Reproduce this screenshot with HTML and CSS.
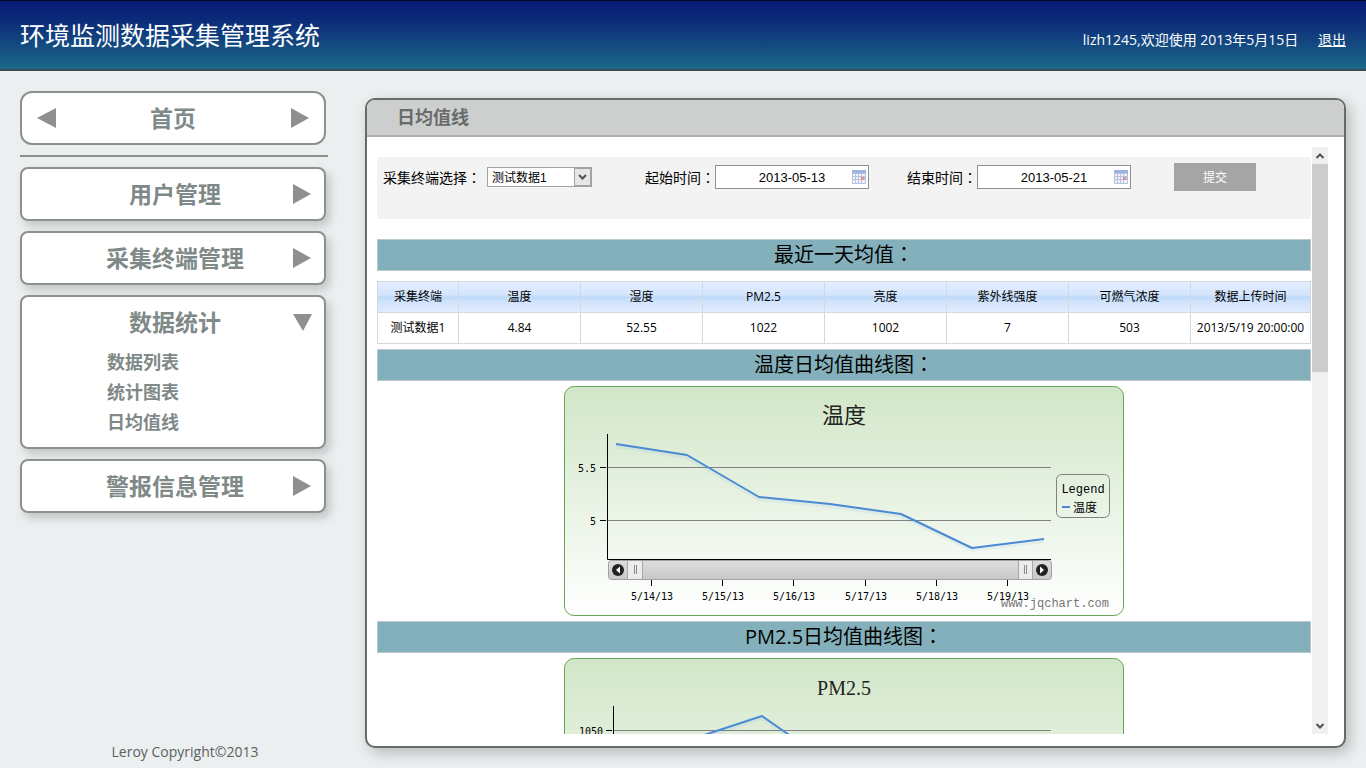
FILE: index.html
```html
<!DOCTYPE html>
<html lang="zh-CN">
<head>
<meta charset="utf-8">
<title>环境监测数据采集管理系统</title>
<link rel="stylesheet" href="styles.css">
</head>
<body>
<header class="topbar">
  <h1 class="brand">环境监测数据采集管理系统</h1>
  <p class="welcome">lizh1245,欢迎使用 2013年5月15日 <a class="logout" href="#">退出</a></p>
</header>
<div class="page">
  <aside class="sidebar">
    <nav class="menu">
      <a class="card home" href="#">
        <svg class="arrow" viewBox="0 0 20 20"><path d="M0 10 19 0V20Z"/></svg>
        <span class="card-title">首页</span>
        <svg class="arrow" viewBox="0 0 20 20"><path d="M2 0 20 10 2 20Z"/></svg>
      </a>
      <div class="rule"></div>
      <section class="card shaded">
        <button class="card-head" type="button"><span class="card-title">用户管理</span><svg class="arrow" viewBox="0 0 20 20"><path d="M1 0 19 10 1 20Z"/></svg></button>
      </section>
      <section class="card shaded">
        <button class="card-head" type="button"><span class="card-title">采集终端管理</span><svg class="arrow" viewBox="0 0 20 20"><path d="M1 0 19 10 1 20Z"/></svg></button>
      </section>
      <section class="card shaded open">
        <button class="card-head" type="button"><span class="card-title">数据统计</span><svg class="arrow" viewBox="0 0 20 20"><path d="M1 2H20L11 19Z"/></svg></button>
        <ul class="submenu">
          <li><a href="#">数据列表</a></li>
          <li><a href="#">统计图表</a></li>
          <li><a href="#">日均值线</a></li>
        </ul>
      </section>
      <section class="card shaded">
        <button class="card-head" type="button"><span class="card-title">警报信息管理</span><svg class="arrow" viewBox="0 0 20 20"><path d="M1 0 19 10 1 20Z"/></svg></button>
      </section>
    </nav>
    <footer class="copyright">Leroy Copyright©2013</footer>
  </aside>

  <main class="panel">
    <h2 class="panel-title">日均值线</h2>
    <div class="panel-body">
      <div class="content">
        <form class="filter">
          <label for="terminal">采集终端选择<span lang="zh-TW">：</span></label>
          <span class="select-wrap">
            <select id="terminal"><option>测试数据1</option></select>
            <svg class="select-arrow" viewBox="0 0 18 20"><rect x="0.5" y="1.5" width="16" height="17" fill="#e6e6e6" stroke="#a3a3a3"/><path d="M5 8 8.500 11.500 12 8" fill="none" stroke="#505050" stroke-width="2"/></svg>
          </span>
          <label class="start" for="from">起始时间<span lang="zh-TW">：</span></label>
          <span class="date-wrap">
            <input id="from" type="text" value="2013-05-13">
            <svg class="calendar" viewBox="0 0 14 14"><rect width="14" height="14" rx="1" fill="#b9c2dc"/><rect y="0" width="14" height="3" fill="#9fb3e2"/><path d="M1 4h2v2H1zM4 4h2v2H4zM7 4h2v2H7zM10 4h3v2h-3zM1 7h2v2H1zM4 7h2v2H4zM7 7h2v2H7zM1 10h2v3H1zM4 10h2v3H4zM7 10h2v3H7zM10 10h3v3h-3z" fill="#eef2ff"/><path d="M9 7h3v3H9z" fill="#e59393"/></svg>
          </span>
          <label class="end" for="to">结束时间<span lang="zh-TW">：</span></label>
          <span class="date-wrap">
            <input id="to" type="text" value="2013-05-21">
            <svg class="calendar" viewBox="0 0 14 14"><rect width="14" height="14" rx="1" fill="#b9c2dc"/><rect y="0" width="14" height="3" fill="#9fb3e2"/><path d="M1 4h2v2H1zM4 4h2v2H4zM7 4h2v2H7zM10 4h3v2h-3zM1 7h2v2H1zM4 7h2v2H4zM7 7h2v2H7zM1 10h2v3H1zM4 10h2v3H4zM7 10h2v3H7zM10 10h3v3h-3z" fill="#eef2ff"/><path d="M9 7h3v3H9z" fill="#e59393"/></svg>
          </span>
          <button class="submit" type="submit">提交</button>
        </form>

        <h3 class="band">最近一天均值<span lang="zh-TW">：</span></h3>
        <table class="readings">
          <colgroup><col class="col-name"><col class="col-value" span="6"><col></colgroup>
          <thead>
            <tr><th>采集终端</th><th>温度</th><th>湿度</th><th>PM2.5</th><th>亮度</th><th>紫外线强度</th><th>可燃气浓度</th><th>数据上传时间</th></tr>
          </thead>
          <tbody>
            <tr><td>测试数据1</td><td>4.84</td><td>52.55</td><td>1022</td><td>1002</td><td>7</td><td>503</td><td>2013/5/19 20:00:00</td></tr>
          </tbody>
        </table>

        <h3 class="band">温度日均值曲线图<span lang="zh-TW">：</span></h3>
        <div class="chart">
          <svg class="plot" viewBox="0 0 558 228">
            <defs>
              <linearGradient id="bar" x1="0" y1="0" x2="0" y2="1"><stop offset="0" stop-color="#dedede"/><stop offset="1" stop-color="#c8c8c8"/></linearGradient>
            </defs>
            <text class="plot-title" x="279" y="36">温度</text>
            <path class="grid" d="M43 80.500H486M43 133.500H486"/>
            <path class="axis" d="M35 80.500h6M35 133.500h6M42.500 47V172.500H486"/>
            <g class="tick-label y"><text x="31" y="85">5.5</text><text x="31" y="138">5</text></g>
            <polyline class="halo" points="51,59 122,70 194,112 265,119 336,129 407,163 479,154"/>
            <polyline class="series" points="51,57 122,68 194,110 265,117 336,127 407,161 479,152"/>
            <rect x="43.500" y="173.500" width="443" height="19" rx="3" fill="url(#bar)" stroke="#a0a0a0"/>
            <path d="M63 174h14v18H63zM453 174h14v18h-14z" fill="#ececec"/>
            <path d="M62.500 174v18M77.500 174v18M453.500 174v18M467.500 174v18" stroke="#a8a8a8"/>
            <path d="M69.500 178v9M71.500 178v9M459.500 178v9M461.500 178v9" stroke="#888888"/>
            <circle cx="53" cy="183" r="6" fill="#222222"/><path d="M55 179.500v7L51 183z" fill="#ffffff"/>
            <circle cx="477" cy="183" r="6" fill="#222222"/><path d="M475 179.500v7l4-3.500z" fill="#ffffff"/>
            <path class="axis" d="M86.500 193v6M157.500 193v6M228.500 193v6M300.500 193v6M371.500 193v6M442.500 193v6"/>
            <g class="tick-label x"><text x="87" y="213">5/14/13</text><text x="158" y="213">5/15/13</text><text x="229" y="213">5/16/13</text><text x="301" y="213">5/17/13</text><text x="372" y="213">5/18/13</text><text x="443" y="213">5/19/13</text></g>
            <rect x="491.500" y="87.500" width="53" height="43" rx="5" fill="none" stroke="#7d857a"/>
            <text class="legend" x="518" y="106">Legend</text>
            <path d="M497 120h8" stroke="#4a8ad4" stroke-width="2"/>
            <text class="legend-item" x="508" y="125">温度</text>
            <text class="credit" x="544" y="220">www.jqchart.com</text>
          </svg>
        </div>

        <h3 class="band">PM2.5日均值曲线图<span lang="zh-TW">：</span></h3>
        <div class="chart">
          <svg class="plot" viewBox="0 0 558 228">
            <text class="plot-title latin" x="279" y="36">PM2.5</text>
            <path class="grid" d="M49 71.500H486"/>
            <path class="axis" d="M41 71.500h6M48.500 47V172.500H486"/>
            <g class="tick-label y"><text x="38" y="76">1050</text></g>
            <polyline class="halo" points="127,82 197,59 253,98"/>
            <polyline class="series" points="127,80 197,57 253,96"/>
          </svg>
        </div>
      </div>
      <div class="scrollbar">
        <svg class="scroll-arrow" viewBox="0 0 16 17"><path d="M4.500 11 8 7.500 11.500 11"/></svg>
        <div class="thumb"></div>
        <svg class="scroll-arrow last" viewBox="0 0 16 17"><path d="M4.500 7 8 10.500 11.500 7"/></svg>
      </div>
    </div>
  </main>
</div>
</body>
</html>
```
FILE: styles.css
```css
* {
  box-sizing: border-box;
}

body {
  display: flex;
  flex-direction: column;
  height: 100vh;
  margin: 0;
  overflow: hidden;
  background: #ebeff0;
  color: #000;
  font-family: "Open Sans", "Noto Sans CJK SC", sans-serif;
  font-size: 14px;
}

h1, h2, h3, p, ul {
  margin: 0;
  padding: 0;
}

h1, h3 {
  font-weight: normal;
}

a {
  color: inherit;
  text-decoration: none;
}

button {
  padding: 0;
  border: 0;
  background: none;
  color: inherit;
  font: inherit;
  cursor: pointer;
}

/* Top bar */
.topbar {
  display: flex;
  flex: none;
  justify-content: space-between;
  height: 71px;
  padding: 0 20px;
  border-top: 1px solid #04061c;
  border-bottom: 2px solid #3a4a55;
  background: linear-gradient(#081b76, #0c2878 25%, #1a6988);
  color: #fff;
}

.brand {
  font-size: 25px;
  line-height: 68px;
}

.welcome {
  padding-top: 8px;
  line-height: 62px;
}

.logout {
  margin-left: 16px;
  text-decoration: underline;
}

/* Columns */
.page {
  display: flex;
  flex: 1;
  gap: 37px;
  min-height: 0;
  padding: 0 20px;
}

.sidebar {
  display: flex;
  flex: none;
  flex-direction: column;
  justify-content: space-between;
  width: 308px;
  padding: 20px 0 6px;
}

.menu {
  display: flex;
  flex-direction: column;
  gap: 10px;
  color: #7f8988;
  font-weight: bold;
}

.card {
  margin-right: 2px;
  border: 2px solid #8e9090;
  border-radius: 8px;
  background: #fff;
}

.shaded {
  box-shadow: 4px 5px 10px rgba(0, 0, 0, 0.18);
}

.home {
  display: flex;
  align-items: center;
  justify-content: space-between;
  height: 54px;
  padding: 0 15px;
  border-radius: 12px;
}

.rule {
  height: 2px;
  background: #8e9090;
}

.card-head {
  display: grid;
  grid-template-columns: 20px 1fr 20px;
  align-items: center;
  width: 100%;
  height: 50px;
  padding: 0 12px 0 16px;
}

.card-title {
  grid-column: 2;
  font-size: 23px;
  line-height: 50px;
  text-align: center;
}

.arrow {
  width: 20px;
  height: 20px;
  fill: #8e9090;
}

.submenu {
  padding: 0 0 10px 85px;
  list-style: none;
  font-size: 18px;
  line-height: 30px;
}

.copyright {
  padding-left: 22px;
  color: #5c5f60;
  line-height: 20px;
  text-align: center;
}

/* Main panel */
.panel {
  display: flex;
  flex: 1;
  flex-direction: column;
  min-width: 0;
  margin: 27px 0 20px;
  overflow: hidden;
  border: 2px solid #6a6a6a;
  border-radius: 10px;
  background: #fff;
  box-shadow: 4px 5px 14px rgba(0, 0, 0, 0.22);
}

.panel-title {
  flex: none;
  padding-left: 30px;
  border-bottom: 2px solid #b0b0b0;
  background: #cdcfce;
  color: #696b6b;
  font-size: 18px;
  font-weight: bold;
  line-height: 35px;
}

.panel-body {
  display: flex;
  flex: 1;
  gap: 1px;
  min-height: 0;
  padding: 10px 16px 12px 10px;
}

.content {
  flex: 1;
  min-width: 0;
  overflow: auto;
  padding-top: 10px;
  scrollbar-width: none;
}

.scrollbar {
  display: flex;
  flex-direction: column;
  width: 16px;
  background: #f0f0f0;
}

.scroll-arrow {
  flex: none;
  width: 16px;
  height: 17px;
  fill: none;
  stroke: #505050;
  stroke-width: 2;
}

.thumb {
  height: 208px;
  background: #cdcdcd;
}

.last {
  margin-top: auto;
}

/* Filter row */
.filter {
  display: flex;
  align-items: center;
  margin-bottom: 20px;
  padding: 6px 6px 28px;
  background: #f3f3f3;
}

.filter label {
  white-space: nowrap;
}

.select-wrap, .date-wrap {
  position: relative;
  display: flex;
}

.select-wrap {
  margin-left: 6px;
}

.select-wrap select {
  width: 105px;
  height: 20px;
  padding: 1px 4px 0;
  appearance: none;
  border: 1px solid #a3a3a3;
  border-radius: 0;
  background: #fff;
  color: #000;
  font-family: "Liberation Sans", "Noto Sans CJK SC", sans-serif;
  font-size: 12px;
}

.select-arrow {
  position: absolute;
  top: 0;
  right: 0;
  width: 18px;
  height: 20px;
  pointer-events: none;
}

.start {
  margin-left: 53px;
}

.end {
  margin-left: 38px;
}

.date-wrap input {
  width: 154px;
  height: 24px;
  padding: 0;
  border: 1px solid #8f9090;
  background: #fff;
  font-family: "Liberation Sans", sans-serif;
  font-size: 13px;
  text-align: center;
}

.calendar {
  position: absolute;
  top: 5px;
  right: 3px;
  width: 14px;
  height: 14px;
}

.submit {
  width: 82px;
  height: 28px;
  margin-left: 43px;
  background: #a5a5a5;
  color: #fff;
  font-size: 12px;
}

/* Section bands and table */
.band {
  border: 1px solid #b9c9cc;
  background: #84b0bb;
  font-size: 20px;
  line-height: 30px;
  text-align: center;
}

.readings {
  width: 100%;
  margin: 10px 0 5px;
  border-collapse: collapse;
  table-layout: fixed;
  font-size: 12px;
  line-height: 30px;
  text-align: center;
}

.col-name {
  width: 81px;
}

.col-value {
  width: 122px;
}

.readings th, .readings td {
  padding: 0;
  border: 1px solid #d3d9dc;
  font-weight: normal;
  white-space: nowrap;
}

.readings th {
  background: linear-gradient(#e2edff, #d5e5fc 40%, #bdd8f8 50%, #cfe2fc 62%, #e2edff);
}

/* Charts */
.chart {
  width: 560px;
  height: 230px;
  margin: 5px auto;
  border: 1px solid #68a557;
  border-radius: 10px;
  background: linear-gradient(#d1e6c8, #fff);
}

.plot {
  display: block;
  width: 100%;
  height: 100%;
}

.plot-title {
  fill: #222;
  font-family: "Liberation Serif", "Noto Sans CJK SC", serif;
  font-size: 22px;
  text-anchor: middle;
}

.latin {
  font-size: 20px;
}

.grid {
  fill: none;
  stroke: #808080;
}

.axis {
  fill: none;
  stroke: #000;
}

.series, .halo {
  fill: none;
  stroke: #4a8ad4;
  stroke-linejoin: round;
  stroke-width: 2;
}

.halo {
  stroke-opacity: 0.08;
  stroke-width: 4;
}

.tick-label {
  font-family: "DejaVu Sans Mono", monospace;
  font-size: 10px;
}

.x {
  text-anchor: middle;
}

.y {
  text-anchor: end;
}

.legend, .legend-item, .credit {
  font-family: "Liberation Mono", "Noto Sans CJK SC", monospace;
  font-size: 12px;
}

.legend {
  text-anchor: middle;
}

.credit {
  fill: #777;
  text-anchor: end;
}
```
